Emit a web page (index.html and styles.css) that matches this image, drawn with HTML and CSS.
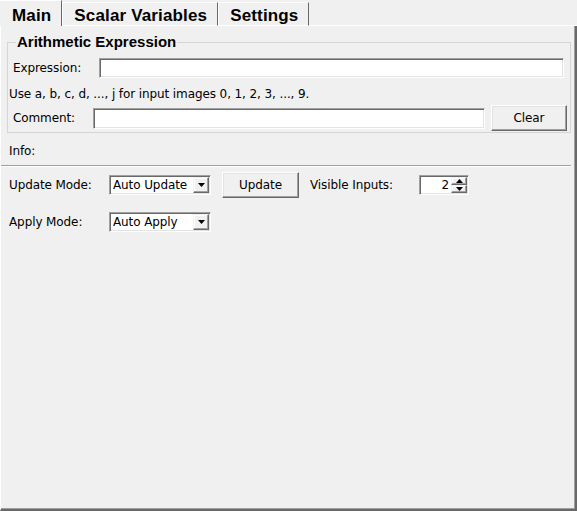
FILE: index.html
```html
<!DOCTYPE html>
<html>
<head>
<meta charset="utf-8">
<link rel="stylesheet" href="styles.css">
</head>
<body>
<div class="window">
  <div class="tabs">
    <div class="tab tab-active">Main</div>
    <div class="tab">Scalar Variables</div>
    <div class="tab">Settings</div>
    <div class="tab-rest"></div>
  </div>
  <div class="pane">
    <fieldset class="group">
      <legend class="group-title">Arithmetic Expression</legend>
      <div class="row row-expr">
        <span class="label label-expr">Expression:</span>
        <div class="edit edit-expr"></div>
      </div>
      <div class="hint">Use a, b, c, d, ..., j for input images 0, 1, 2, 3, ..., 9.</div>
      <div class="row row-comment">
        <span class="label label-comment">Comment:</span>
        <div class="edit edit-comment"></div>
        <div class="button button-clear">Clear</div>
      </div>
    </fieldset>
    <div class="info">Info:</div>
    <div class="separator"></div>
    <div class="row row-update">
      <span class="label label-mode">Update Mode:</span>
      <div class="combo">
        <span class="combo-text">Auto Update</span>
        <span class="combo-btn"><svg width="7" height="4" viewBox="0 0 7 4"><path d="M0 0H7L3.5 4Z" fill="#000"/></svg></span>
      </div>
      <div class="button button-update">Update</div>
      <span class="label label-visible">Visible Inputs:</span>
      <div class="spin">
        <span class="spin-text">2</span>
        <span class="spin-btns">
          <span class="spin-btn"><svg width="7" height="4" viewBox="0 0 7 4"><path d="M3.5 0L7 4H0Z" fill="#000"/></svg></span>
          <span class="spin-btn"><svg width="7" height="4" viewBox="0 0 7 4"><path d="M0 0H7L3.5 4Z" fill="#000"/></svg></span>
        </span>
      </div>
    </div>
    <div class="row row-apply">
      <span class="label label-mode">Apply Mode:</span>
      <div class="combo">
        <span class="combo-text">Auto Apply</span>
        <span class="combo-btn"><svg width="7" height="4" viewBox="0 0 7 4"><path d="M0 0H7L3.5 4Z" fill="#000"/></svg></span>
      </div>
    </div>
  </div>
</div>
</body>
</html>
```
FILE: styles.css
```css
html, body {
  margin: 0;
  padding: 0;
  background: #f0f0f0;
}
body {
  font-family: "DejaVu Sans", sans-serif;
  font-size: 12px;
  letter-spacing: -0.1px;
  color: #000;
}
.window {
  width: 577px;
  height: 511px;
  display: flex;
  flex-direction: column;
  box-sizing: border-box;
}
.tabs {
  display: flex;
  align-items: flex-end;
  height: 26px;
  flex: none;
}
.tab {
  font-family: "Liberation Sans", sans-serif;
  font-weight: bold;
  font-size: 17px;
  letter-spacing: 0.15px;
  line-height: 20px;
  padding: 3px 10px 0 11px;
  border-right: 1px solid #696969;
  border-left: 1px solid #fff;
  border-top: 1px solid #fff;
  border-bottom: 1px solid #fff;
  box-sizing: border-box;
  height: 24px;
}
.tab-active {
  height: 26px;
  padding-top: 5px;
  padding-left: 12px;
  border-left: none;
  border-bottom: none;
  background: #f0f0f0;
}
.tab-rest {
  flex: 1;
  border-bottom: 1px solid #fff;
}
.pane {
  flex: 1;
  border-left: 1px solid #fff;
  border-right: 2px solid #696969;
  border-bottom: 2px solid #696969;
  box-shadow: inset -1px -1px 0 #a0a0a0;
  display: flex;
  flex-direction: column;
}
.group {
  margin: 7px 4px 0 6px;
  padding: 0 0 1px 0;
  border: 1px solid #d5d5d5;
  min-width: 0;
}
.group-title {
  font-family: "Liberation Sans", sans-serif;
  font-weight: bold;
  font-size: 15px;
  letter-spacing: 0;
  line-height: 18px;
  margin-left: 8px;
  padding: 0 1px;
}
.row {
  display: flex;
  align-items: center;
}
.row-expr {
  margin-top: 7px;
  height: 20px;
  padding-left: 5px;
  padding-right: 6px;
}
.label-expr {
  width: 86px;
  flex: none;
}
.label-comment {
  width: 80px;
  flex: none;
}
.edit {
  box-sizing: border-box;
  background: #fff;
  border: 1px solid;
  border-color: #a0a0a0 #fff #fff #a0a0a0;
  box-shadow: inset 1px 1px 0 #696969, inset -1px -1px 0 #e3e3e3;
}
.edit-expr {
  flex: 1;
  height: 20px;
}
.hint {
  margin-top: 9px;
  line-height: 15px;
  padding-left: 1px;
}
.row-comment {
  margin-top: 3px;
  height: 26px;
  padding-left: 5px;
  padding-right: 3px;
}
.edit-comment {
  width: 392px;
  height: 21px;
  flex: none;
}
.button {
  box-sizing: border-box;
  background: #f0f0f0;
  border: 1px solid;
  border-color: #fff #696969 #696969 #fff;
  box-shadow: inset -1px -1px 0 #a0a0a0, inset 1px 1px 0 #e3e3e3;
  display: flex;
  align-items: center;
  justify-content: center;
  height: 26px;
}
.button-clear {
  width: 76px;
  margin-left: 6px;
}
.info {
  margin-top: 11px;
  padding-left: 8px;
  line-height: 15px;
}
.separator {
  margin: 6px 4px 0 0;
  height: 0;
  border-top: 1px solid #a0a0a0;
  border-bottom: 1px solid #fff;
}
.row-update {
  margin-top: 5px;
  height: 26px;
  padding-left: 8px;
}
.row-apply {
  margin-top: 11px;
  height: 26px;
  padding-left: 8px;
}
.label-mode {
  width: 100px;
  flex: none;
}
.combo {
  box-sizing: border-box;
  width: 102px;
  height: 20px;
  background: #fff;
  border: 1px solid;
  border-color: #a0a0a0 #fff #fff #a0a0a0;
  box-shadow: inset 1px 1px 0 #696969, inset -1px -1px 0 #e3e3e3;
  display: flex;
  align-items: stretch;
  padding: 1px;
}
.combo-text {
  flex: 1;
  padding-left: 2px;
  line-height: 16px;
}
.combo-btn, .spin-btn {
  box-sizing: border-box;
  width: 16px;
  background: #f0f0f0;
  border: 1px solid;
  border-color: #f0f0f0 #696969 #696969 #f0f0f0;
  box-shadow: inset -1px -1px 0 #a0a0a0, inset 1px 1px 0 #fff;
  display: flex;
  align-items: center;
  justify-content: center;
}
.button-update {
  width: 77px;
  margin-left: 11px;
}
.label-visible {
  margin-left: 11px;
  width: 109px;
  flex: none;
}
.spin {
  box-sizing: border-box;
  width: 50px;
  height: 20px;
  background: #fff;
  border: 1px solid;
  border-color: #a0a0a0 #fff #fff #a0a0a0;
  box-shadow: inset 1px 1px 0 #696969, inset -1px -1px 0 #e3e3e3;
  display: flex;
  padding: 1px;
}
.spin-text {
  flex: 1;
  text-align: right;
  padding-right: 2px;
  line-height: 16px;
}
.spin-btns {
  display: flex;
  flex-direction: column;
  width: 16px;
}
.spin-btn {
  flex: 1;
  height: 8px;
}
```
